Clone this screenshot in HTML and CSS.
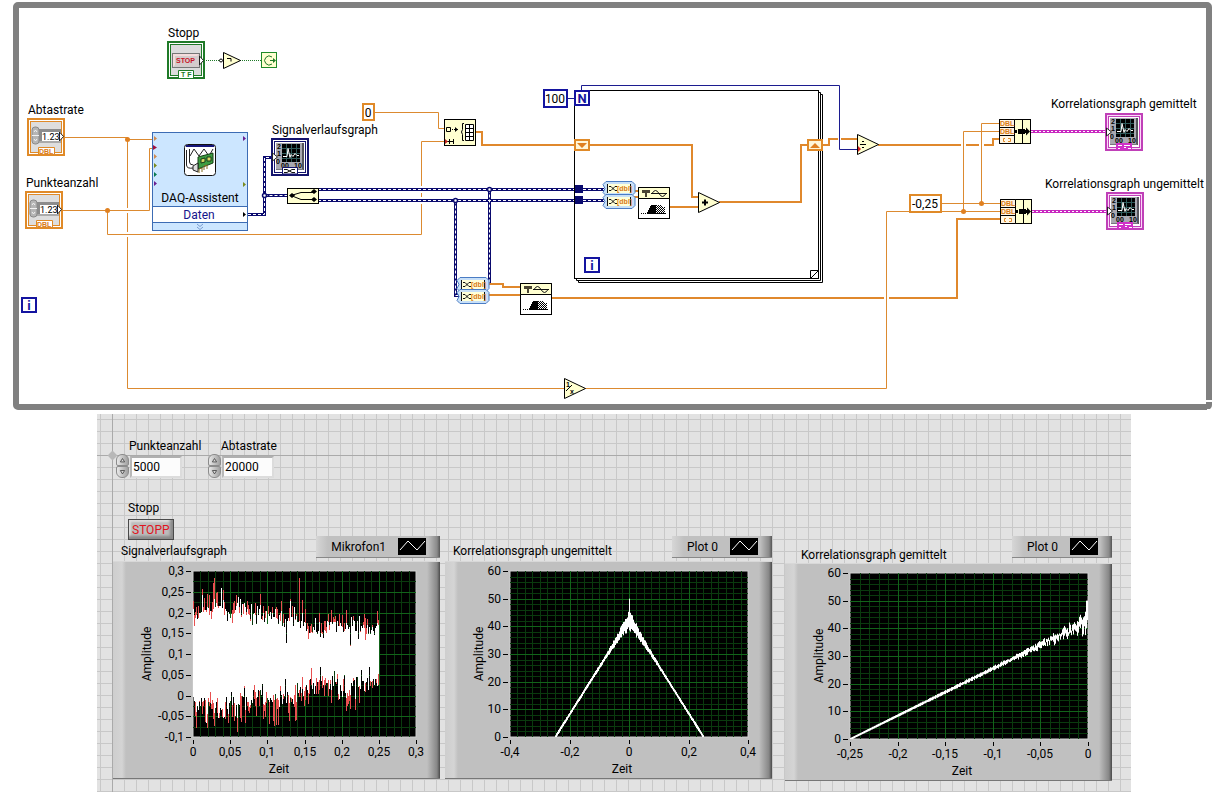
FILE: index.html
```
<!DOCTYPE html>
<html lang="de">
<head>
    <meta charset="UTF-8">
    <meta name="viewport" content="width=device-width, initial-scale=1.0">
    <title>Korrelation</title>
    <link rel="stylesheet" href="styles.css">
</head>
<body>
    <section class="diagram">
        <svg viewBox="0 0 1221 414" xmlns="http://www.w3.org/2000/svg">
            <defs>
                <symbol id="numeric" viewBox="0 0 38 38" overflow="visible">
                    <rect x="1" y="1" width="36" height="36" fill="#fff" stroke="#e08a28" stroke-width="2"/>
                    <rect x="3.500" y="3.500" width="31" height="31" fill="#dedede" stroke="#e08a28"/>
                    <path d="M12 11h22v3H15v11h-3z" fill="#8c8c8c"/>
                    <rect x="15" y="14" width="17" height="9" fill="#fff"/>
                    <path d="M12 23h22v2H12z" fill="#aaa"/>
                    <rect x="5" y="9" width="7" height="17" rx="3" fill="#b5b5b5" stroke="#8a8a8a"/>
                    <path d="M5 17.500h7M7 14l1.500-2 1.500 2M7 21l1.500 2 1.500-2" fill="none" stroke="#f2f2f2"/>
                    <text class="small" x="15" y="22">1.23</text>
                    <path d="M32.500 14v9l4-4.500z" fill="#fff" stroke="#222"/>
                    <path d="M11.500 36v-6.500h16V36" fill="#fff" stroke="#e08a28"/>
                    <text class="micro bold orange" x="12" y="36">DBL</text>
                </symbol>

                <symbol id="graph" viewBox="0 0 38 38" overflow="visible">
                    <rect x="1" y="1" width="36" height="36" fill="var(--ring)" stroke="currentColor" stroke-width="2"/>
                    <rect x="3.500" y="3.500" width="31" height="31" fill="#fff" stroke="currentColor"/>
                    <rect x="5" y="5" width="28" height="27" fill="#a8a8b0"/>
                    <path d="M32 5v27" stroke="#55555c" stroke-width="2"/>
                    <path d="M5 31.500h27" stroke="#77777e"/>
                    <rect x="11" y="6" width="18" height="18" fill="#000"/>
                    <path d="M15.500 6v18M20.500 6v18M25.500 6v18M11 10.500h18M11 15.500h18M11 20.500h18" stroke="#2f5a5a"/>
                    <path d="M12 18.500h4l1-8 2 9 1-3 2 2 2-3 2 2h2" fill="none" stroke="#fff"/>
                    <text class="micro bold" x="6" y="11">2</text>
                    <text class="micro bold" x="6" y="18">1</text>
                    <text class="micro bold" x="5" y="26">0</text>
                    <text class="micro bold" x="10" y="30">00</text>
                    <text class="micro bold" x="23" y="30">10</text>
                    <path d="M1.500 15v8l5-4z" fill="#fff" stroke="#222"/>
                </symbol>

                <symbol id="convert" viewBox="0 0 33 15" overflow="visible">
                    <path d="M3 .5h26l3 3v8l-3 3H3l-3-3 2-4-2-4z" fill="#c8e0f8" stroke="#4a7cc4"/>
                    <rect x="4" y="3" width="24" height="9" fill="#ffffd8"/>
                    <path d="M4.500 3v9M27.500 3v9" stroke="#111"/>
                    <path d="M6 5.500h2l4 4h2M6 9.500h2l4-4h2" fill="none" stroke="#111"/>
                    <text class="micro bold orange" x="14" y="10">[dbl]</text>
                </symbol>

                <pattern id="checker" width="2" height="2" patternUnits="userSpaceOnUse">
                    <path d="M0 0h1v1H0zM1 1h1v1H1z" fill="#000"/>
                </pattern>
                <symbol id="correlate" viewBox="0 0 32 32" overflow="visible">
                    <rect x=".5" y=".5" width="31" height="31" fill="#fff" stroke="#000"/>
                    <path d="M.5.5h31v11H.500z" fill="#ffffd0" stroke="#000"/>
                    <path d="M4 3h8v3H9v4H7V6H4z" fill="#4a4433"/>
                    <path d="M14 6.500q3.500-6 7 0t7 0M13 6.500h16" fill="none" stroke="#111"/>
                    <path d="M3 26.500h26" stroke="#000" stroke-dasharray="1 1"/>
                    <path d="M9 27v-2h1v-2h1v-2h1v-2h1v-1h5v9z" fill="#000"/>
                    <rect x="18" y="18" width="6" height="9" fill="url(#checker)"/>
                    <rect x="24" y="20" width="3" height="7" fill="url(#checker)"/>
                </symbol>

                <symbol id="bundle" viewBox="0 0 32 25" overflow="visible">
                    <rect x=".5" y=".5" width="31" height="24" fill="#ffffd0" stroke="#000"/>
                    <path d="M.5.5h15v24H.500zM.5 8.500h15M.5 16.500h15" fill="#fff6e4" stroke="#000"/>
                    <path d="M23.500 0v25" stroke="#000"/>
                    <text class="micro bold orange" x="1" y="7">DBL</text>
                    <text class="micro bold orange" x="1" y="15">DBL</text>
                    <path d="M6 19.500H4.500v3H6M9 19.500h2.500v3H9" fill="none" stroke="#e08a28"/>
                    <path d="M15 11h3v3h-3zM19 10h7v1h1V8.500l4 4-4 4V14h-1v1h-7z" fill="#000"/>
                </symbol>

                <symbol id="index" viewBox="0 0 16 16" overflow="visible">
                    <rect x="1" y="1" width="14" height="14" fill="#fff" stroke="#1414a0" stroke-width="2"/>
                    <text class="glyph" x="8" y="13">i</text>
                </symbol>
            </defs>

            <!-- while loop border -->
            <rect x="16" y="5" width="1193" height="402" rx="2" fill="#fff" stroke="#808080" stroke-width="6"/>
            <path d="M1204 401h10M1207 410h3" stroke="#fff" stroke-width="2"/>

            <!-- stop terminal -->
            <text x="168" y="37">Stopp</text>
            <rect x="168" y="42" width="36" height="36" fill="#fff" stroke="#1f7a28" stroke-width="2"/>
            <rect x="170.500" y="44.500" width="31" height="31" fill="#dcdcdc" stroke="#1f7a28"/>
            <rect x="172.500" y="53.500" width="27" height="14" fill="#d4cccc" stroke="#777"/>
            <path d="M173 54h26l-2 2h-22v9l-2 2z" fill="#f4dcdc"/>
            <text class="micro red" x="176" y="63">STOP</text>
            <path d="M199.500 56v9l4-4.500z" fill="#fff" stroke="#222"/>
            <path d="M178.500 78v-7.500h15V78" fill="#fff" stroke="#1f7a28"/>
            <text class="micro green" x="181" y="77">T F</text>
            <path class="bool" d="M206 60.500h13M240 60.500h21"/>
            <circle cx="221" cy="60.500" r="1.500" fill="#fff" stroke="#000"/>
            <path class="node" d="M223.500 52.500v16l17-8z"/>
            <path d="M227 58.500h4v3" fill="none" stroke="#000"/>
            <rect x="261.500" y="52.500" width="15" height="15" fill="#ffffd0" stroke="#1f8a28"/>
            <path d="M272 57a4.500 4.500 0 1 0 0 7" fill="none" stroke="#1f7a28"/>
            <path d="M270 60h3v-2l3 2.500-3 2.500v-2h-3z" fill="#1f7a28"/>

            <!-- thin wires -->
            <path class="wire" d="M127.500 139.500V388.500H886.500V211.500H1000"/>
            <path class="gap" d="M122 210.500h10M122 234.500h10"/>
            <path class="wire" d="M64 137.500H127.500V139.500H153"/>
            <path class="wire" d="M62 210.500H149.500V148.500H153"/>
            <path class="wire" d="M107.500 210.500V234.500H421.500V141.500H445"/>
            <path class="wire" d="M375 112.500H438.500V128.500H445"/>
            <path class="thick" d="M878 145H993V139H1000"/>
            <path class="thick" d="M552 298H957V219H1000"/>
            <path class="gap" d="M963.500 140v10M981.500 140v10M886.500 293v10M981.500 127v9"/>
            <path class="wire" d="M942 203.500H1000M963.500 211.500V131.500H1000M981.500 203.500V123.500H1000M886.500 292v12"/>
            <g fill="#e08020">
                <circle cx="127.500" cy="139.500" r="2.500"/>
                <circle cx="107.500" cy="210.500" r="2.500"/>
                <circle cx="981.500" cy="203.500" r="2.500"/>
                <circle cx="963.500" cy="211.500" r="2.500"/>
            </g>

            <!-- numeric terminals -->
            <text x="28" y="114">Abtastrate</text>
            <use href="#numeric" x="27" y="118" width="38" height="38"/>
            <text x="26" y="187">Punkteanzahl</text>
            <use href="#numeric" x="25" y="191" width="38" height="38"/>
            <use href="#index" x="21" y="297" width="16" height="16"/>

            <!-- DAQ assistant -->
            <rect x="152.500" y="132.500" width="95" height="98" fill="#cce6ff" stroke="#3c6cb4"/>
            <rect x="152.500" y="206.500" width="95" height="16" fill="#fff" stroke="#3c6cb4"/>
            <path d="M154 136v5l3-2.500zM154 154v5l3-2.500z" fill="#d08a50"/>
            <path d="M154 163v5l3-2.500zM243 182v5l3-2.500z" fill="#7a8a20"/>
            <path d="M154 172v5l3-2.500z" fill="#0a7a50"/>
            <path d="M154 181v5l3-2.500zM243 136v5l3-2.500z" fill="#6a2090"/>
            <path d="M153 145v5l4-2.500z" fill="#a01040"/>
            <path d="M243 212v5l3-2.500z" fill="#000"/>
            <rect x="184.500" y="144.500" width="31" height="31" rx="3" fill="#fff" stroke="#111"/>
            <path d="M186 145h28v2h-28z" fill="#15157a"/>
            <path d="M186.500 150v15q0 4 7 3M189.500 149v13q0 3 4 3M190 156l4-7 5 7 5-7 5 7 4-7" fill="none" stroke="#222"/>
            <path d="M198 157l15-4v10l-15 6z" fill="#3c9c40" stroke="#143c14"/>
            <path d="M193 166l5-3v9l-5-2z" fill="#ddd" stroke="#222"/>
            <path d="M201 159l4-1v4l-4 1zM207 157h4v4h-4z" fill="#d8d860" stroke="#163816"/>
            <path d="M199 173v-4l3-1v4M204 170v-4l3-1v4" fill="none" stroke="#806a20"/>
            <text class="mid" x="200" y="202">DAQ-Assistent</text>
            <text class="mid navy" x="199" y="219">Daten</text>
            <path d="M197 224l3 2.500 3-2.500M197 227l3 2.500 3-2.500" fill="none" stroke="#7a9cd0"/>

            <!-- dynamic data wires -->
            <path class="halo" d="M318 189.500H575M318 200.500H575"/>
            <path class="dyn" d="M248 214.500H264.500V157.500H272M264.500 195.500H288M318 189.500H604M318 200.500H604M489.500 189.500V284M455.500 200.500V295.500H460"/>
            <path class="dash" d="M248 214.500H264.500V157.500H272M264.500 195.500H288M318 189.500H604M318 200.500H604M489.500 189.500V284M455.500 200.500V295.500H460"/>
            <g fill="#fff" stroke="#0a0a6e" stroke-width="1.500">
                <circle cx="264.500" cy="195.500" r="2"/>
                <circle cx="489.500" cy="189.500" r="2"/>
                <circle cx="455.500" cy="200.500" r="2"/>
            </g>
            <rect x="287.500" y="188.500" width="31" height="15" fill="#ffffd0" stroke="#000"/>
            <path d="M291 195.500l10-3h12M291 195.500l10 4h12" fill="none" stroke="#000"/>
            <path d="M289 195.500l3-2.500 3 2.500-3 2.500zM311 191.500l3-2.500 3 2.500-3 2.500zM311 199.500l3-2.500 3 2.500-3 2.500z" fill="#000"/>

            <text x="272" y="134">Signalverlaufsgraph</text>
            <g class="term-navy">
                <use href="#graph" x="271" y="138" width="38" height="38"/>
                <path d="M282.500 174v-6.500h15v6.500z" fill="#fff" stroke="#14146e"/>
                <path d="M284 169.500h3l5 3h3M284 172.500h3l5-3h3" fill="none" stroke="#111"/>
            </g>

            <!-- array initialisation -->
            <rect x="363" y="104" width="11" height="16" fill="#fff" stroke="#e08a28" stroke-width="2"/>
            <text class="mid" x="368" y="117">0</text>
            <rect x="444.500" y="119.500" width="31" height="26" fill="#ffffd0" stroke="#000"/>
            <path d="M446.500 127.500h4v4h-4zM452 129.500h1M454 129.500h4M446 141.500h8M449.500 139v5M453.500 139v5M464 123.500h-1.500v6l-1 2.500 1 2.500v6h1.500" fill="none" stroke="#000"/>
            <path d="M455 127l3 2.500-3 2.500z"/>
            <path d="M465.500 124.500h8v16h-8zM465.500 128.500h8M465.500 132.500h8M465.500 136.500h8M469.500 124v17" fill="#fff" stroke="#000"/>
            <path d="M445 139v5l3-2.500z" fill="#c02020"/>
            <path class="thick" d="M476 132H482V145H575"/>

            <!-- for loop -->
            <g fill="none" stroke="#000">
                <path d="M578.500 282.500H822.500V94.500H820M576.500 280.500H820.500V92.500H818M578.500 282.500V280M576.500 280.500V278"/>
                <rect x="574.500" y="90.500" width="244" height="188"/>
                <path d="M810.500 278.500v-8h8z" fill="#fff"/>
            </g>
            <rect x="544" y="90" width="23" height="17" fill="#fff" stroke="#1414a0" stroke-width="2"/>
            <text class="mid" x="555" y="103">100</text>
            <path class="int" d="M568 98.500h7M581.500 91V85.500H839.500V149.500H858"/>
            <rect x="575" y="91" width="14" height="14" fill="#fff" stroke="#1414a0" stroke-width="2"/>
            <text class="glyph" x="582" y="103">N</text>
            <use href="#index" x="584" y="257" width="16" height="16"/>
            <path class="thick" d="M590 145H692V197H699M670 207H699M719 202H801V145H808M823 145H829V139H838M841 139H858M634 191H639M634 197H639"/>
            <g fill="#fff6d8" stroke="#e08a28" stroke-width="2">
                <rect x="575" y="140" width="14" height="10"/>
                <rect x="808" y="140" width="14" height="10"/>
            </g>
            <path d="M577 143h10l-5 5zM810 148h10l-5-5z" fill="#e08020"/>
            <path d="M575 185h8v8h-8zM575 196h8v8h-8z" fill="#0a0a6e"/>
            <use href="#convert" x="603" y="181" width="33" height="15"/>
            <use href="#convert" x="603" y="194" width="33" height="15"/>
            <use href="#correlate" x="638" y="187" width="32" height="32"/>
            <path class="node" d="M698.500 192.500v20l21-10z"/>
            <path d="M702 202.500h6M705 199.500v6" stroke="#000" stroke-width="2"/>
            <path class="node" d="M857.500 134.500v20l21-10z"/>
            <path d="M860 144.500h6M862 141.500h2M862 147.500h2" stroke="#000"/>
            <path d="M858 146v6l3-3z" fill="#d02020"/>

            <!-- single correlation -->
            <path class="thick" d="M489 284H503V287H521M489 295H521"/>
            <use href="#convert" x="457" y="277" width="33" height="15"/>
            <use href="#convert" x="457" y="289" width="33" height="15"/>
            <use href="#correlate" x="520" y="283" width="32" height="32"/>

            <path class="node" d="M564.500 378.500v20l21-10z"/>
            <text class="micro bold" x="566" y="387">1</text>
            <path d="M566 391l6-6" stroke="#000"/>
            <text class="micro bold" x="570" y="394">x</text>

            <!-- graph outputs -->
            <rect x="910" y="195" width="31" height="17" fill="#fff" stroke="#e08a28" stroke-width="2"/>
            <text class="mid" x="925" y="208">-0,25</text>
            <use href="#bundle" x="999" y="119" width="32" height="25"/>
            <use href="#bundle" x="1000" y="199" width="32" height="25"/>
            <path class="cluster" d="M1031 131.500H1106M1032 211.500H1107"/>
            <path class="clusterdash" d="M1031 131.500H1106M1032 211.500H1107"/>
            <text x="1051" y="108">Korrelationsgraph gemittelt</text>
            <text x="1045" y="188">Korrelationsgraph ungemittelt</text>
            <g class="term-pink">
                <use href="#graph" x="1105" y="113" width="38" height="38"/>
                <use href="#graph" x="1106" y="192" width="38" height="38"/>
                <path d="M1116 143h16v7h-16zM1117 222h16v7h-16z" fill="#d030c8"/>
                <path d="M1118 145.500h4M1124 145.500h6M1118 148.500h2M1124 147.500h2M1128 148.500h3M1119 224.500h4M1125 224.500h6M1119 227.500h2M1125 226.500h2M1129 227.500h3" stroke="#fff"/>
            </g>
        </svg>
    </section>

    <main class="panel">
        <div class="controls">
            <div class="control">
                <label for="punkte">Punkteanzahl</label>
                <div class="numeric">
                    <div class="spinner">
                        <button type="button" aria-label="Punkteanzahl erhöhen"><svg viewBox="0 0 13 10"><path d="M4 7l2.500-4L9 7z"/></svg></button>
                        <button type="button" aria-label="Punkteanzahl verringern"><svg viewBox="0 0 13 10"><path d="M4 3l2.500 4L9 3z"/></svg></button>
                    </div>
                    <input id="punkte" type="text" value="5000">
                </div>
            </div>
            <div class="control">
                <label for="rate">Abtastrate</label>
                <div class="numeric">
                    <div class="spinner">
                        <button type="button" aria-label="Abtastrate erhöhen"><svg viewBox="0 0 13 10"><path d="M4 7l2.500-4L9 7z"/></svg></button>
                        <button type="button" aria-label="Abtastrate verringern"><svg viewBox="0 0 13 10"><path d="M4 3l2.500 4L9 3z"/></svg></button>
                    </div>
                    <input id="rate" type="text" value="20000">
                </div>
            </div>
        </div>

        <div class="stop">
            <label for="stopp">Stopp</label>
            <button id="stopp" class="stop-button" type="button">STOPP</button>
        </div>

        <div class="graphs">
            <section class="graph">
                <header>
                    <h2>Signalverlaufsgraph</h2>
                    <div class="legend wide"><span>Mikrofon1</span><svg viewBox="0 0 28 17"><path d="M2 12l8-9 9 9 8-9"/></svg></div>
                </header>
                <svg class="frame" id="signal" viewBox="0 0 327 218"></svg>
            </section>
            <section class="graph">
                <header>
                    <h2>Korrelationsgraph ungemittelt</h2>
                    <div class="legend"><span>Plot 0</span><svg viewBox="0 0 28 17"><path d="M2 12l8-9 9 9 8-9"/></svg></div>
                </header>
                <svg class="frame" id="raw" viewBox="0 0 327 218"></svg>
            </section>
            <section class="graph last">
                <header>
                    <h2>Korrelationsgraph gemittelt</h2>
                    <div class="legend"><span>Plot 0</span><svg viewBox="0 0 28 17"><path d="M2 12l8-9 9 9 8-9"/></svg></div>
                </header>
                <svg class="frame" id="mean" viewBox="0 0 327 218"></svg>
            </section>
        </div>
    </main>

    <script src="script.js"></script>
</body>
</html>
```
FILE: script.js
```
const TOP = 10;
const BOTTOM = 176;
const RIGHT = 303;

let seed = 7;
function rnd() {
    seed = (seed * 16807) % 2147483647;
    return seed / 2147483647;
}

function el(parent, name, attrs, text) {
    const node = document.createElementNS('http://www.w3.org/2000/svg', name);
    Object.keys(attrs).forEach(key => node.setAttribute(key, attrs[key]));
    if (text !== undefined) node.textContent = text;
    parent.appendChild(node);
    return node;
}

// axes, grid and labels; minor = subdivisions between two labels
function drawAxes(svg, left, titleX, xLabels, yLabels, xMinor, yMinor) {
    const w = RIGHT - left;
    const h = BOTTOM - TOP;
    el(svg, 'rect', { x: left, y: TOP, width: w, height: h, class: 'screen' });

    const nx = (xLabels.length - 1) * xMinor;
    const ny = (yLabels.length - 1) * yMinor;
    let minor = '';
    let major = '';
    for (let i = 1; i < nx; i++) {
        const x = Math.round(left + i * w / nx) + 0.5;
        const line = `M${x} ${TOP}V${BOTTOM}`;
        if (i % xMinor) minor += line; else major += line;
    }
    for (let i = 1; i < ny; i++) {
        const y = Math.round(TOP + i * h / ny) + 0.5;
        const line = `M${left} ${y}H${RIGHT}`;
        if (i % yMinor) minor += line; else major += line;
    }
    el(svg, 'path', { d: minor, class: 'minor' });
    el(svg, 'path', { d: major, class: 'major' });

    let ticks = '';
    xLabels.forEach((label, i) => {
        const x = Math.round(left + i * w / (xLabels.length - 1));
        ticks += `M${x + 0.5} ${BOTTOM + 3}v4`;
        el(svg, 'text', { x: x, y: 195, 'text-anchor': 'middle' }, label);
    });
    yLabels.forEach((label, i) => {
        const y = Math.round(TOP + i * h / (yLabels.length - 1));
        ticks += `M${left - 7} ${y + 0.5}h5`;
        el(svg, 'text', { x: left - 9, y: y + 4, 'text-anchor': 'end' }, label);
    });
    el(svg, 'path', { d: ticks, class: 'ticks' });
    el(svg, 'text', { x: titleX, y: 212, 'text-anchor': 'middle' }, 'Zeit');
    el(svg, 'text', { x: -93, y: 38, 'text-anchor': 'middle', class: 'vertical' }, 'Amplitude');
}

function lerp(points, x) {
    for (let i = 1; i < points.length; i++) {
        if (x <= points[i][0]) {
            const a = points[i - 1];
            const b = points[i];
            return a[1] + (b[1] - a[1]) * (x - a[0]) / (b[0] - a[0]);
        }
    }
    return points[points.length - 1][1];
}

function drawSignal() {
    const svg = document.getElementById('signal');
    drawAxes(svg, 80, 166,
        ['0', '0,05', '0,1', '0,15', '0,2', '0,25', '0,3'],
        ['0,3', '0,25', '0,2', '0,15', '0,1', '0,05', '0', '-0,05', '-0,1'], 5, 2);

    const upper = [[0, 60], [4, 60], [9, 50], [14, 45], [18, 56], [24, 42], [30, 48], [36, 56], [46, 46], [60, 54], [72, 54], [90, 60], [97, 57], [108, 59], [115, 68], [128, 74], [140, 61], [150, 68], [162, 66], [172, 68], [186, 68]];
    const lower = [[0, 139], [10, 140], [20, 138], [30, 146], [40, 138], [50, 140], [60, 135], [70, 131], [80, 137], [90, 133], [100, 134], [108, 133], [118, 124], [130, 122], [142, 122], [152, 126], [165, 120], [176, 116], [186, 122]];
    const redTop = { 16: 34, 20: 22, 21: 17, 40: 42, 54: 40, 62: 42, 75: 45, 97: 38, 106: 17, 112: 48, 128: 62, 133: 66, 171: 53, 172: 57 };
    const redBottom = { 12: 161, 26: 157, 47: 157, 48: 161, 55: 150, 56: 152, 63: 155, 76: 163, 80: 160, 81: 165, 83: 164, 85: 164, 95: 152, 96: 160, 102: 160, 111: 145, 155: 143, 156: 140 };
    const whiteTop = { 9: 34, 28: 27, 45: 36, 47: 38, 93: 82, 97: 40, 122: 57, 141: 61, 157: 85, 166: 55, 183: 65 };
    const whiteBottom = { 13: 162, 25: 157, 31: 156, 44: 157, 92: 118, 127: 106, 162: 138 };

    let red = '';
    let white = '';
    for (let i = 0; i <= 185; i++) {
        const x = 80.5 + i;
        const t = whiteTop[i] || lerp(upper, i) + (rnd() - 0.5) * 22 * (rnd() + 0.2);
        const b = whiteBottom[i] || lerp(lower, i) + (rnd() - 0.5) * 30 * (rnd() + 0.2);
        const rt = redTop[i] || t - (rnd() > 0.6 ? rnd() * 14 : 0);
        const rb = redBottom[i] || b + (rnd() > 0.6 ? rnd() * 18 : 0);
        red += `M${x} ${Math.round(rt)}V${Math.round(rb)}`;
        white += `M${x} ${Math.round(t)}V${Math.round(b)}`;
    }
    el(svg, 'path', { d: red, class: 'trace red' });
    el(svg, 'path', { d: white, class: 'trace' });
}

// triangle of the autocorrelation, getting noisier towards zero lag
function value(k) {
    const base = 42.5 * k;
    const noise = 0.5 + 3.6 * Math.pow(k, 7);
    return [base - noise * (0.4 + 0.6 * rnd()), base + noise * (0.4 + 0.6 * rnd())];
}

function toY(v) {
    return Math.min(BOTTOM, BOTTOM - v * (BOTTOM - TOP) / 60);
}

function drawRaw() {
    const svg = document.getElementById('raw');
    drawAxes(svg, 65, 177, ['-0,4', '-0,2', '0', '0,2', '0,4'], ['60', '50', '40', '30', '20', '10', '0'], 8, 5);
    let d = '';
    const half = 74;
    for (let i = -half; i <= half; i++) {
        const v = value(1 - Math.abs(i) / half);
        d += `M${184.5 + i} ${toY(v[0] - 0.3).toFixed(1)}V${toY(v[1] + 0.4).toFixed(1)}`;
    }
    d += `M184.5 ${toY(40)}V${toY(50)}`;
    el(svg, 'path', { d: d, class: 'trace' });
}

function drawMean() {
    const svg = document.getElementById('mean');
    drawAxes(svg, 65, 177, ['-0,25', '-0,2', '-0,15', '-0,1', '-0,05', '0'], ['60', '50', '40', '30', '20', '10', '0'], 5, 5);
    const steps = 235;
    let d = '';
    for (let i = 0; i <= steps; i++) {
        const k = i / steps;
        const mid = 42 * k + (rnd() - 0.5) * 3.5 * Math.pow(k, 5);
        const size = 0.4 + rnd() * (0.8 * k + 2.4 * Math.pow(k, 8));
        d += `M${65.5 + i} ${toY(mid - size).toFixed(1)}V${toY(mid + size).toFixed(1)}`;
    }
    d += `M300.5 ${toY(46)}V${toY(40)}M301.5 ${toY(50)}V${toY(40)}M302.5 ${toY(50)}V${toY(43)}`;
    el(svg, 'path', { d: d, class: 'trace' });
}

drawSignal();
drawRaw();
drawMean();
```
FILE: styles.css
```
* {
    box-sizing: border-box;
}

body {
    margin: 0;
    background: #fff;
    color: #000;
    font-family: Roboto, "Noto Sans", sans-serif;
    font-size: 12px;
    line-height: 16px;
}

svg {
    display: block;
}

svg text {
    font-size: 12px;
}


.diagram svg {
    width: 100%;
    height: auto;
}

.diagram .mid {
    text-anchor: middle;
}

.diagram .navy {
    fill: #14148c;
}

.diagram .small {
    font-size: 9px;
}

.diagram .micro {
    font-family: "Liberation Sans", sans-serif;
    font-size: 7px;
}

.diagram .bold {
    font-weight: bold;
}

.diagram .orange {
    fill: #d87a14;
}

.diagram .red {
    fill: #c81428;
    font-weight: bold;
}

.diagram .green {
    fill: #1f7a28;
    font-weight: bold;
}

.diagram .glyph {
    fill: #1414a0;
    font-size: 13px;
    font-weight: bold;
    text-anchor: middle;
}

.term-navy {
    --ring: #fff;
    color: #14146e;
}

.term-pink {
    --ring: #fbd8f8;
    color: #c040b8;
}

.wire {
    fill: none;
    stroke: #dc8a30;
}

.thick {
    fill: none;
    stroke: #e0882c;
    stroke-width: 2;
}

.gap {
    stroke: #fff;
    stroke-width: 5;
}

.halo {
    stroke: #fff;
    stroke-width: 7;
}

.int {
    fill: none;
    stroke: #1c1c90;
}

.bool {
    stroke: #1f7a28;
    stroke-dasharray: 1 1;
}

.dyn {
    fill: none;
    stroke: #0a0a6e;
    stroke-width: 3;
}

.dash {
    fill: none;
    stroke: #fff;
    stroke-dasharray: 3 2;
}

.cluster {
    stroke: #c828c0;
    stroke-width: 3;
}

.clusterdash {
    stroke: #fff;
    stroke-dasharray: 2 2;
}

.node {
    fill: #ffffd0;
    stroke: #000;
}


.panel {
    position: relative;
    margin: 0 90px 0 97px;
    padding: 24px 19px 11px 16px;
    background-color: #e2e2e2;
    background-image:
        linear-gradient(#aaa, #aaa),
        linear-gradient(#aaa, #aaa),
        linear-gradient(#c8c8c8 1px, transparent 1px),
        linear-gradient(90deg, #c8c8c8 1px, transparent 1px);
    background-size: 1px 100%, 100% 1px, 12px 12px, 12px 12px;
    background-position: 15px 0, 0 41px, 3px 5px, 3px 5px;
    background-repeat: no-repeat, no-repeat, repeat, repeat;
}

/* origin marker */
.panel::before {
    content: "";
    position: absolute;
    left: 12px;
    top: 38px;
    width: 7px;
    height: 7px;
    background: #b8b8b8;
    transform: rotate(45deg);
}

.controls {
    display: flex;
    gap: 26px;
    padding-left: 3px;
}

.control {
    width: 66px;
    white-space: nowrap;
}

.control label {
    display: block;
    padding-left: 13px;
}

.numeric {
    display: flex;
    height: 24px;
}

.spinner {
    width: 14px;
}

.spinner button {
    display: block;
    width: 13px;
    height: 12px;
    padding: 0;
    border: 1px solid #8c8c8c;
    border-radius: 6px 6px 2px 2px;
    background: linear-gradient(90deg, #e8e8e8, #a0a0a0);
}

.spinner button + button {
    border-radius: 2px 2px 6px 6px;
}

.spinner path {
    fill: #ddd;
    stroke: #444;
}

.numeric input {
    flex: 1;
    min-width: 0;
    height: 22px;
    margin-top: 2px;
    padding: 0 0 0 1px;
    border: 2px solid #dcdcdc;
    border-top-color: #b0b0b0;
    border-left-color: #b8b8b8;
    background: #fcfcfc;
    font: inherit;
}

.stop {
    margin: 22px 0 0 15px;
}

.stop label {
    display: block;
}

.stop-button {
    display: block;
    height: 21px;
    margin-top: 3px;
    padding: 0 3px;
    border: 1px solid #4a4a4a;
    box-shadow: inset -3px -3px 3px #888, inset 2px 2px 2px #ddd;
    background: #bcbcbc;
    color: #e01420;
    font: inherit;
    line-height: 16px;
}


.graphs {
    display: flex;
    align-items: flex-start;
    margin-top: -4px;
}

.graph {
    flex: 1;
    min-width: 0;
}

.graph + .graph {
    margin-left: 5px;
}

.graph + .last {
    margin-left: 13px;
}

.graph header {
    display: flex;
    justify-content: space-between;
    align-items: flex-end;
    height: 25px;
    padding-left: 8px;
}

.last header {
    height: 27px;
    padding-left: 16px;
}

.graph h2 {
    margin: 0 0 2px;
    font-size: 12px;
    font-weight: normal;
    line-height: 16px;
    white-space: nowrap;
}

.last h2 {
    margin: 0;
}

.legend {
    display: flex;
    align-items: center;
    align-self: flex-start;
    justify-content: flex-end;
    gap: 12px;
    width: 100px;
    height: 22px;
    padding-right: 14px;
    border-bottom: 1px solid #888;
    background: linear-gradient(90deg, #d6d6d6, #c0c0c0 12px, #c0c0c0 calc(100% - 12px), #8a8a8a calc(100% - 3px), #555);
}

.legend.wide {
    width: 124px;
}

.legend svg {
    width: 28px;
    height: 17px;
    background: #000;
}

.legend path {
    fill: none;
    stroke: #fff;
}

.frame {
    width: 100%;
    height: auto;
    box-shadow: inset 0 1px #d8d8d8, inset 0 -1px #777;
    background: linear-gradient(90deg, #cecece, #d4d4d4 9px, #c0c0c0 13px, #c0c0c0 calc(100% - 13px), #868686 calc(100% - 3px), #4a4a4a);
}

.screen {
    fill: #000;
    stroke: #d0d0d0;
}

.minor {
    stroke: #0a3a0e;
}

.major {
    stroke: #12641a;
}

.ticks {
    stroke: #000;
}

.vertical {
    transform: rotate(-90deg);
}

.trace {
    fill: none;
    stroke: #fff;
}

.trace.red {
    stroke: #e85050;
}
```
